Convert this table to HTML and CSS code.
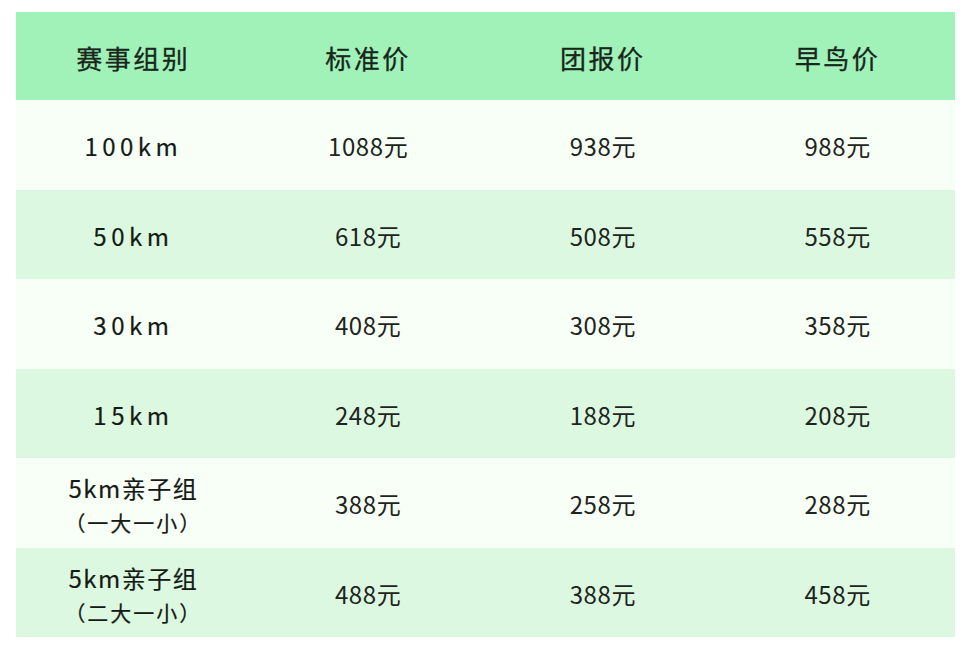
FILE: index.html
```html
<!DOCTYPE html>
<html lang="zh-CN">
<head>
<meta charset="utf-8">
<title>价格表</title>
<link rel="stylesheet" href="styles.css">
</head>
<body>
<div class="page">
  <div class="table">
    <div class="row head">
      <div class="cell">赛事组别</div>
      <div class="cell">标准价</div>
      <div class="cell">团报价</div>
      <div class="cell">早鸟价</div>
    </div>
    <div class="row odd">
      <div class="cell group wide">100km</div>
      <div class="cell">1088元</div>
      <div class="cell">938元</div>
      <div class="cell">988元</div>
    </div>
    <div class="row even">
      <div class="cell group wide">50km</div>
      <div class="cell">618元</div>
      <div class="cell">508元</div>
      <div class="cell">558元</div>
    </div>
    <div class="row odd">
      <div class="cell group wide">30km</div>
      <div class="cell">408元</div>
      <div class="cell">308元</div>
      <div class="cell">358元</div>
    </div>
    <div class="row even">
      <div class="cell group wide">15km</div>
      <div class="cell">248元</div>
      <div class="cell">188元</div>
      <div class="cell">208元</div>
    </div>
    <div class="row odd">
      <div class="cell group">
        <span class="line1">5km亲子组</span>
        <span class="line2">（一大一小）</span>
      </div>
      <div class="cell">388元</div>
      <div class="cell">258元</div>
      <div class="cell">288元</div>
    </div>
    <div class="row even">
      <div class="cell group">
        <span class="line1">5km亲子组</span>
        <span class="line2">（二大一小）</span>
      </div>
      <div class="cell">488元</div>
      <div class="cell">388元</div>
      <div class="cell">458元</div>
    </div>
  </div>
</div>
</body>
</html>
```
FILE: styles.css
```css
* { box-sizing: border-box; }
html, body { margin: 0; padding: 0; background: #ffffff; }
body {
  font-family: "Noto Sans CJK SC", "Noto Sans", sans-serif;
  color: #1e2420;
}
.page {
  padding: 12px 12px 0 16px;
}
.table {
  width: 939px;
  display: flex;
  flex-direction: column;
}
.row {
  display: grid;
  grid-template-columns: repeat(4, 1fr);
  height: 89.5px;
}
.row.head {
  height: 88px;
  background: #a0f2b9;
}
.row.odd { background: #f8fff6; }
.row.even { background: #dcf8e0; }
.cell {
  display: flex;
  flex-direction: column;
  align-items: center;
  justify-content: center;
  padding-top: 4px;
  font-size: 24px;
  letter-spacing: 0.6px;
  line-height: 1.2;
}
.head .cell {
  font-size: 26px;
  letter-spacing: 2.5px;
  color: #18261b;
  -webkit-text-stroke: 0.3px #18261b;
}
.group { color: #151a16; -webkit-text-stroke: 0.2px #151a16; }
.group.wide { letter-spacing: 4.5px; }
.line1 { letter-spacing: 1.5px; }
.line2 {
  font-size: 21px;
  letter-spacing: 2px;
  margin-top: 7px;
}
```
